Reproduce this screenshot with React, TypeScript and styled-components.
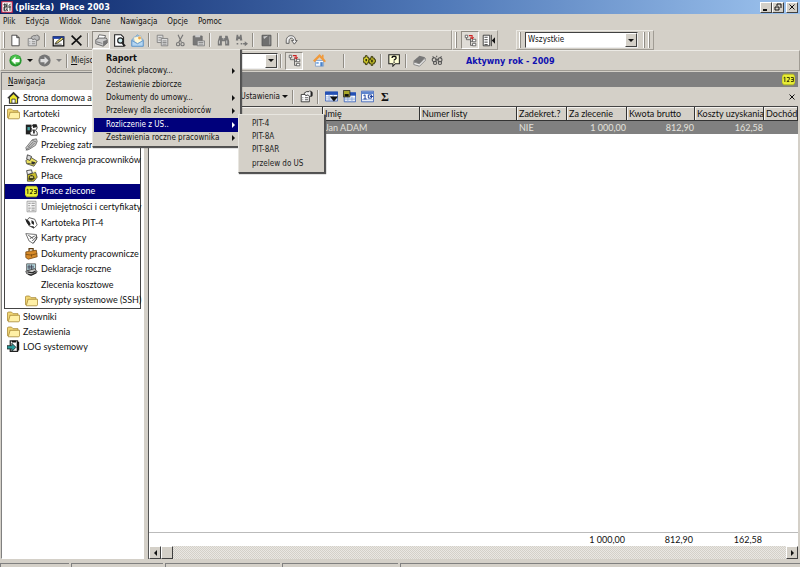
import React from "react";
import styled, { createGlobalStyle, css } from "styled-components";

const face = "#d4d0c8";
const shade = "#808080";
const navy = "#00007b";

const Global = createGlobalStyle`
  * { box-sizing: border-box; }
  html, body { margin: 0; height: 100%; background: ${face}; }
  body { overflow: hidden; color: #111; font: 9px/12px Lato, "Liberation Sans", Arial, sans-serif; }
  #root { height: 100%; }
  button, input, select { font: inherit; color: inherit; margin: 0; padding: 0; border: 0; border-radius: 0; background: none; }
  ul { list-style: none; margin: 0; padding: 0; }
`;

const uiFont = css`font-family: "DejaVu Sans Condensed", "DejaVu Sans", Tahoma, sans-serif; font-size: 8px;`;
const raised = css`border: 1px solid; border-color: #fff #404040 #404040 #fff;`;

/* ---------- icons ---------- */

const Svg = styled.svg<{ $size?: number }>`
  display: block;
  flex: none;
  width: ${p => p.$size ?? 13}px;
  height: ${p => p.$size ?? 13}px;
`;

const shapes: Record<string, React.ReactNode> = {
  app: <><path fill="#fff" stroke="#c02040" strokeWidth="1.5" d="M1 1h14v14H1z" /><path fill="none" stroke="#222" strokeWidth="1.2" d="M3 5h4v3H4v5h3M8 3v10M10 6l3-2M5 3v9M9 8h4M9 13l-2-2M12 6v7" /></>,
  page: <path fill="#fff" stroke="#333" d="M3.500 1.500h6l3 3v10h-9zM9.500 1.500v3h3" />,
  props: <><path fill="#ddd" stroke="#777" d="M1.500 5.500h10v9h-10z" /><path stroke="#777" d="M3 9.500h1M6 9.500h4M3 12h1M6 12h4" /><path fill="#bbb" stroke="#666" d="M5 4l3-2h3l1-1 3 2v4l-3 1-2-2-3 1z" /></>,
  propsDark: <><path fill="#fff" stroke="#222" d="M1.500 5.500h10v9h-10z" /><path stroke="#333" d="M3 9.500h1M6 9.500h4M3 12h1M6 12h4" /><path fill="#eee" stroke="#222" d="M5 4l3-2h3l1-1 3 2v4l-3 1-2-2-3 1z" /><path fill="#222" d="M13 2h2v6h-2z" /></>,
  edit: <><path fill="#fff" stroke="#111" strokeWidth="1.500" d="M1.500 3.500h13v11h-13z" /><path fill="#1c3fa8" d="M1 3h14v3H1z" /><path stroke="#555" d="M3 12.500h9" /><path fill="#efe070" stroke="#222" d="M5 10l7-6 2 2-7 5-3 1z" /></>,
  cross: <path stroke="#111" strokeWidth="2" d="M2 2l12 12M14 2L2 13" />,
  crossThin: <path stroke="#111" strokeWidth="2" d="M3 3l10 10M13 3L3 13" />,
  printer: <><path fill="#fff" stroke="#555" d="M5 1l8 1-2 5H3z" /><path fill="#ccc" stroke="#555" d="M1 7l4-2h9l1 2v4l-5 4-9-3z" /><path fill="#777" d="M10 9l5-2v4l-5 4zM2 9l7 2v1L2 10z" /></>,
  preview: <><path fill="#fff" stroke="#222" strokeWidth="1.300" d="M2 1h8l3 3v11H2z" /><circle cx="9" cy="8" r="3.200" fill="#ccebee" stroke="#222" strokeWidth="1.400" /><path stroke="#222" strokeWidth="2" d="M11 11l4 4" /></>,
  mail: <><path fill="#9cc5e8" stroke="#6a9cc8" d="M1 7l7-6 7 6v8H1z" /><path fill="#fff8d8" stroke="#9cb8d0" d="M3 4l9-2 2 7-6 3-4-3z" /><path fill="#b4d6f2" stroke="#5b93c5" d="M1 8l7 4 7-4v7H1z" /><circle cx="10.500" cy="5" r="1.800" fill="#f0a848" /></>,
  copy: <><path fill="#ddd" stroke="#777" d="M1.500 1.500h7v9h-7z" /><path fill="#ddd" stroke="#777" d="M6.500 5.500h8v9h-8z" /><path stroke="#777" d="M3 4.500h4M3 7.500h3M8 8.500h5M8 10.500h5M8 12.500h5" /></>,
  cut: <g fill="none" stroke="#777" strokeWidth="1.400"><path d="M5 1l4 9M11 1L6 10" /><circle cx="5" cy="12.500" r="2" /><circle cx="10.500" cy="12.500" r="2" /></g>,
  paste: <><path fill="#777" stroke="#666" d="M1.500 2.500h11v11h-11z" /><path fill="#ccc" d="M4 1h6v3H4z" /><path fill="#ddd" stroke="#777" d="M6.500 8.500h9v6h-9z" /><path stroke="#777" d="M8 10.500h6M8 12.500h6" /></>,
  find: <g fill="#777"><path d="M3 2h3v3h4V2h3l2 7v5h-5V9H6v5H1V9z" /><path stroke="#ddd" d="M3 8v4M12 8v4M7 6h2" /></g>,
  findNext: <g fill="#777"><path d="M2 1h2v2h2V1h2l1 7H6V6H4v2H1z" /><path d="M7 11h2v2H7zM10 11h2v2h-2zM12 9l4 3-4 3zM2 11h2v2H2z" /></g>,
  bookGray: <><path fill="#6f6f6f" stroke="#555" d="M2.500 1.500h11v13h-11z" /><path fill="#c9c9c9" d="M4 3l6-1-5 4z" /><path stroke="#aaa" d="M12 3v10" /></>,
  arc: <path fill="#eee" stroke="#555" strokeWidth="1.100" d="M1.500 11.500v-3C1.500 0 13 0 13 8l2 0-3.500 4.500L8 8h2.500C10.500 4 5 4 5 8.500v3z" />,
  tree: <><path fill="none" stroke="#555" d="M3 4v3h5M8 5v9M8 9h3M8 14h3" /><path fill="#fff" stroke="#555" d="M1.500 1.500h3v3h-3zM10.500 6.500h4v3h-4zM10.500 11.500h4v3h-4z" /><path fill="none" stroke="#c22" strokeWidth="1.300" d="M6 2h4v3M8 4l2 2 2-2" /></>,
  collapse: <><path fill="#fff" stroke="#222" d="M1.500 1.500h8v13h-8z" /><path stroke="#222" d="M3 4h4M3 7h4M3 10h4M3 13h4M11.500 1v14" /><path fill="#111" d="M16 4v8l-4-4z" /></>,
  back: <><circle cx="8" cy="8" r="7.500" fill="#27962f" /><circle cx="8" cy="7" r="5.800" fill="#4cc04c" /><path fill="#fff" d="M8 3v3h5v4H8v3L3 8z" /></>,
  fwd: <><circle cx="8" cy="8" r="7.500" fill="#757575" /><path fill="#ddd" d="M8 3v3H3v4h5v3l5-5z" /></>,
  house: <><path fill="#f4f8ff" stroke="#7d9cc6" d="M3 8h10v7H3z" /><path fill="#f09a3c" d="M0 8l8-8 3 3V1h2v4l3 4-2 1-6-6-6 6z" /><path fill="#4b83c9" d="M9 10h3v5H9z" /><path fill="#6aa1e0" d="M4 10h3v2H4z" /></>,
  gears: <><path fill="#d5cd2c" stroke="#33330a" strokeWidth="1.100" d="M1 4h2V2h2v2h2v2h2v3H7v2H5v2H3v-2H1V9H0V6h1z" /><path fill="#b9b226" stroke="#33330a" strokeWidth="1.100" d="M9 5h1V3h2v2h2v2h1.500v3H14v2h-2v2h-2v-2H8v-2H7V7h2z" /><path fill="#33330a" d="M3 6h2v3H3zM10 7h2v3h-2z" /></>,
  help: <><path fill="#ffffd5" stroke="#222" strokeWidth="1.300" d="M1 1h13v11H9l-3 3v-3H1z" /><path fill="none" stroke="#111" strokeWidth="1.600" d="M5 5c0-3 5-3 5 0 0 2-2.500 1-2.500 3M7.500 9.300v1.500" /></>,
  bookFlat: <><path fill="#777" d="M0 9l8-7 7 2-7 8z" /><path fill="#eee" stroke="#777" d="M1 10l7 2 7-7v3l-7 7-7-2z" /></>,
  links: <g fill="none" stroke="#555" strokeWidth="1.300"><circle cx="4" cy="7" r="2.500" /><circle cx="11" cy="7" r="2.500" /><circle cx="5" cy="11" r="2" /><circle cx="11" cy="11" r="2" /><path d="M5 7h5M2 3l2 2M7 2v2M13 3l-2 2" /></g>,
  grid: <><path fill="#fff" stroke="#2a55b5" d="M.5 2.500h15v11H.5z" /><path fill="#2450b5" d="M0 2h16v4H0z" /><path stroke="#86a2d8" d="M1 8.500h14M1 11h14M5 6v8M10 6v8" /><path fill="#111" d="M6 8h10l-5 6z" /></>,
  gridSave: <><path fill="#fff" stroke="#2a55b5" d="M1.500 3.500h14v11h-14z" /><path fill="#2450b5" d="M8 3h8v4H8z" /><path stroke="#86a2d8" d="M2 10h13M2 12h13M6 8v7M11 8v7" /><path fill="#a9a72a" stroke="#222" d="M.5.500h8v8h-8z" /><path fill="#111" d="M2 5h5v3H2z" /></>,
  gridFit: <><path fill="#fff" stroke="#2a55b5" d="M.5 1.500h15v13H.5z" /><path fill="#5f86ce" d="M1 2h14v3H1z" /><path stroke="#86a2d8" d="M1 12h14" /><path fill="none" stroke="#1b3f9b" strokeWidth="1.200" d="M3 7l2-1v5M3 11h4M9 6v4h4V6zM11 8h4" /></>,
  badge: <><path fill="#e9ee35" stroke="#b2b81c" d="M2 1.500h12l2 3v7l-2 3H2l-2-3v-7z" /><path fill="none" stroke="#38380a" strokeWidth="1.200" d="M2 6l1.500-1v6M6 5.500h3v2.500L6 10.500h3M11 5.500h3v5h-3M11.500 8H14" /></>,
  home: <><path fill="#efe92e" stroke="#333" strokeWidth="1.300" d="M3 8v7h10V8L8 3z" /><path fill="none" stroke="#333" strokeWidth="1.600" d="M1 9l7-7 7 7" /><path fill="#fff" stroke="#333" d="M6 10h4v5H6z" /></>,
  folder: <><path fill="#f2d775" stroke="#a88834" d="M.5 13.500v-10l1-1h4l2 2h6v2" /><path fill="#fff0a6" stroke="#a88834" d="M3.500 6.500h12v7l-1 1H1.500l2-7z" /></>,
  people: <><path fill="#222" d="M1 2h7v12H1z" /><path fill="#4aa5a5" d="M3 5h3v4H3z" /><path fill="#fff" stroke="#222" d="M7 5l3-3h4l1 4-2 3 2 3v3H7l-1-3 3-3z" /><path fill="#222" d="M9 2h5l1 3-5 1zM10 8h2v5h-2z" /></>,
  tool: <><path fill="#c8c8c8" stroke="#666" d="M1 12l8-10 5-1 1 3-2 5-8 5-3 1z" /><path fill="none" stroke="#666" d="M4 11l6-6M6 12l6-6M9 3l5 2M1 15l5-4" /></>,
  clock: <><path fill="#e8df5e" stroke="#444" d="M1 8l6-4 8 5-4 6-9-3z" /><path fill="#ddd" stroke="#333" d="M3 1l5 2-2 5-4-2z" /><path fill="#333" d="M8 9l5 1-2 3-8-1v-1l5 1z" /></>,
  money: <><path fill="#c9bd27" stroke="#444" d="M3 7l10-3 2 6-4 5H3z" /><path fill="#eee" stroke="#333" d="M2 2l6-1 1 4-6 2z" /><path fill="#3c3c18" d="M5 9l3-2 3 2 1 3-4 2-4-1z" /><path stroke="#fff6a0" strokeWidth="1.500" d="M6 10h4M10 4l4-2" /></>,
  list: <><path fill="#f5f5f5" stroke="#999" d="M2.500 1.500h11v13h-11z" /><path stroke="#777" d="M4 4h3M8 4h4M4 7h2M8 7h4M4 10h3M8 10h4M4 12.500h2M8 12.500h4" /></>,
  card: <><path fill="#fff" stroke="#444" d="M5 2l7 2 3 7-4 4-6-3-3-6z" /><path fill="#222" d="M0 3l5 3 2 4-2 2-3-4zM8 5l3 2v4L8 9zM6 12l5 1v2z" /></>,
  sheet: <><path fill="#fff" stroke="#555" d="M1 2l12 1 2 4-5 7-5-3z" /><path fill="none" stroke="#555" strokeWidth="1.200" d="M4 4l6 4M6 8l6-3M9 11l5-5M14 3v6l-4 5" /></>,
  case: <><path fill="none" stroke="#5a3a10" strokeWidth="1.500" d="M5 5V2h5v3" /><path fill="#d68a28" stroke="#7a4a10" d="M1 6l13-2 1 8-11 3-3-2z" /><path stroke="#7a4a10" d="M1 9l7 1 7-2M8 9v3" /></>,
  declare: <><path fill="#b7dce2" stroke="#555" d="M2 1h11v8H2z" /><path stroke="#445" d="M3 4h8M3 6h8M5 2v6M8 2v6" /><path fill="#ccc" stroke="#333" d="M1 10l11-3 3 4-8 4-5-2z" /><path stroke="#222" strokeWidth="1.500" fill="none" d="M3 11l6 1 4-2M4 14l4 1 6-3" /></>,
  log: <><path fill="#fff" stroke="#222" strokeWidth="1.500" d="M4 1h9v13H4z" /><path fill="#2a9e9e" stroke="#222" d="M0 7h6V4l5 5-5 5v-3H0z" /><path fill="#111" d="M12 2h3v11h-3zM6 1h5v2H6z" /></>,
  none: null,
};

const Icon = ({ name, size }: { name: string; size?: number }) => (
  <Svg viewBox="0 0 16 16" $size={size} fill="none" aria-hidden="true">{shapes[name]}</Svg>
);

const Arrow = styled.span<{ $dir: "down" | "right" | "left"; $tone?: string }>`
  display: block;
  flex: none;
  width: 0;
  height: 0;
  border: 3px solid transparent;
  ${p => p.$dir === "down" && css`border-width: 3px 3px 0; border-top-color: ${p.$tone ?? "#111"};`}
  ${p => p.$dir === "right" && css`border-width: 3px 0 3px 3px; border-left-color: ${p.$tone ?? "#111"};`}
  ${p => p.$dir === "left" && css`border-width: 3px 3px 3px 0; border-right-color: ${p.$tone ?? "#111"};`}
`;

/* ---------- window frame ---------- */

const Window = styled.div`
  height: 100vh;
  display: flex;
  flex-direction: column;
  background: ${face};
`;

const TitleBar = styled.header`
  height: 14px;
  flex: none;
  display: flex;
  align-items: center;
  padding: 0 2px 0 1px;
  gap: 2px;
  background: linear-gradient(90deg, #0a2569, #5079b8 55%, #9dc3ee);
`;

const Title = styled.h1`
  flex: 1;
  margin: 0;
  color: #fff;
  white-space: pre;
  ${uiFont}
  font-size: 9px;
  line-height: 12px;
  font-weight: bold;
`;

const CaptionButtons = styled.div`display: flex;`;

const CaptionButton = styled.button<{ $apart?: boolean }>`
  width: 12px;
  height: 11px;
  display: grid;
  place-items: center;
  background: ${face};
  ${raised}
  margin-left: ${p => (p.$apart ? 2 : 0)}px;
`;

const MenuBar = styled.nav`
  height: 16px;
  flex: none;
  display: flex;
  align-items: center;
  gap: 10px;
  padding: 0 3px;
`;

const MenuButton = styled.button`
  ${uiFont}
  line-height: 14px;
`;

/* ---------- toolbars ---------- */

const BarRow = styled.div`
  height: 20px;
  flex: none;
  display: flex;
  position: relative;
  z-index: 2;
`;

const Bar = styled.div<{ $width?: number }>`
  display: flex;
  align-items: center;
  border: 1px solid;
  border-color: #eceae5 #a09c94 #a09c94 #eceae5;
  ${p => p.$width && css`width: ${p.$width}px;`}
`;

const AddressRow = styled(Bar)`
  height: 21px;
  flex: none;
`;

const Gap = styled.span<{ $w: number }>`flex: 0 0 ${p => p.$w}px;`;

const Grip = styled.span`
  width: 2px;
  height: 16px;
  flex: none;
  margin: 0 1px 0 2px;
  border-left: 1px solid #fff;
  border-right: 1px solid #908c84;
`;

const Sep = styled.span`
  width: 2px;
  height: 14px;
  flex: none;
  margin: 0 3px 0 2px;
  border-left: 1px solid #908c84;
  border-right: 1px solid #eee;
`;

const ToolButton = styled.button<{ $down?: boolean; $narrow?: boolean }>`
  width: ${p => (p.$narrow ? 11 : 18)}px;
  height: 18px;
  flex: none;
  display: grid;
  place-items: center;
  border: 1px solid transparent;
  ${p => p.$down && css`border-color: #908c84 #fff #fff #908c84; background: #dfdcd6;`}
`;

const SumButton = styled(ToolButton)`
  font: bold 12px/14px "Liberation Serif", serif;
`;

const Combo = styled.div<{ $width: number }>`
  width: ${p => p.$width}px;
  height: 16px;
  flex: none;
  display: flex;
  background: #fff;
  border: 1px solid;
  border-color: #404040 #eee #eee #404040;
`;

const ComboSelect = styled.select`
  flex: 1;
  min-width: 0;
  appearance: none;
  padding-left: 2px;
  ${uiFont}
`;

const ComboInput = styled.input`
  flex: 1;
  min-width: 0;
  outline: 0;
`;

const ComboArrow = styled.span`
  width: 12px;
  display: grid;
  place-items: center;
  background: ${face};
  ${raised}
`;

const FieldLabel = styled.label`
  width: 30px;
  ${uiFont}
`;

const YearLabel = styled.strong`
  ${uiFont}
  font-size: 9px;
  color: #1010b0;
`;

/* ---------- popup menus ---------- */

const MenuAnchor = styled.div`
  position: relative;
  flex: none;
`;

const popup = css`
  position: absolute;
  display: grid;
  grid-auto-rows: 1fr;
  padding: 1px;
  background: ${face};
  border: 1px solid;
  border-color: #e8e6e0 #505050 #505050 #e8e6e0;
  box-shadow: 1px 1px 1px #555;
  ${uiFont}
`;

const ReportMenu = styled.ul`
  ${popup}
  top: 100%;
  left: 0;
  width: 149px;
  height: 98px;
`;

const SubMenu = styled.ul`
  ${popup}
  top: -4px;
  left: 144px;
  width: 87px;
  height: 59px;
  color: #222;
  padding: 2px 1px;
`;

const PopupItem = styled.li<{ $active?: boolean }>`
  position: relative;
  display: grid;
  background: ${p => (p.$active ? navy : "transparent")};
  color: ${p => (p.$active ? "#fff" : "inherit")};
`;

const PopupButton = styled.button<{ $strong?: boolean }>`
  display: flex;
  align-items: center;
  justify-content: space-between;
  padding: 0 4px 0 12px;
  text-align: left;
  white-space: nowrap;
  line-height: 12px;
  ${p => p.$strong && css`font-weight: bold; font-size: 9px;`}
`;

/* ---------- body ---------- */

const Body = styled.main`
  flex: 1;
  min-height: 0;
  display: flex;
  gap: 4px;
  padding: 1px 2px 0 1px;
`;

const SidePane = styled.aside`
  width: 143px;
  flex: none;
  display: flex;
  flex-direction: column;
  border: 1px solid;
  border-color: ${shade} #fff #fff ${shade};
`;

const SideTitle = styled.h2`
  height: 17px;
  flex: none;
  margin: 0;
  padding: 2px 6px;
  font-weight: normal;
  ${uiFont}
  line-height: 14px;
`;

const SideTree = styled.div`
  flex: 1;
  min-height: 0;
  overflow: hidden;
  background: #fff;
  padding: 0 2px;
`;

const Group = styled.ul`
  display: grid;
  grid-template-columns: minmax(0, 1fr);
  grid-auto-rows: 1fr;
  height: 204px;
  border: 1px solid #444;
`;

const NodeRow = styled.li<{ $active?: boolean }>`
  display: grid;
  background: ${p => (p.$active ? navy : "transparent")};
  color: ${p => (p.$active ? "#fff" : "inherit")};
`;

const NodeButton = styled.button<{ $nested?: boolean }>`
  width: 100%;
  min-height: 15px;
  display: flex;
  align-items: center;
  gap: 3px;
  padding-left: ${p => (p.$nested ? 20 : 2)}px;
  white-space: nowrap;
  text-align: left;
`;

const TopList = styled.ul`
  ${NodeButton} { padding-left: 3px; }
`;

const WorkPane = styled.section`
  flex: 1;
  min-width: 0;
  display: flex;
  flex-direction: column;
  border-left: 1px solid #555;
`;

const WorkTitle = styled.div`
  height: 15px;
  flex: none;
  display: flex;
  align-items: center;
  justify-content: flex-end;
  padding-right: 3px;
  background: ${shade};
`;

const WorkTools = styled.div`
  height: 19px;
  flex: none;
  display: flex;
  align-items: center;
  padding-right: 1px;
`;

const SettingsButton = styled.button`
  display: flex;
  align-items: center;
  justify-content: flex-end;
  gap: 2px;
  width: 139px;
  ${uiFont}
`;

const Push = styled.span`flex: 1;`;

const TableArea = styled.div`
  flex: 1;
  min-height: 0;
  overflow: hidden;
  background: #fff;
  border-top: 1px solid #444;
`;

const Table = styled.table`
  width: 100%;
  height: 100%;
  table-layout: fixed;
  border-collapse: separate;
  border-spacing: 0;
`;

const Col = styled.col<{ $w?: number }>`width: ${p => (p.$w ? `${p.$w}px` : "auto")};`;

const Th = styled.th`
  height: 14px;
  padding: 0 0 0 2px;
  background: ${face};
  border-right: 1px solid #333;
  border-bottom: 1px solid #333;
  box-shadow: inset 1px 1px #f4f2ee;
  font-weight: normal;
  text-align: left;
  white-space: nowrap;
  overflow: hidden;
`;

const Td = styled.td<{ $num?: boolean }>`
  height: 13px;
  padding: 0 ${p => (p.$num ? 1 : 2)}px;
  background: ${shade};
  color: #e4e2dd;
  text-align: ${p => (p.$num ? "right" : "left")};
  white-space: nowrap;
`;

const Filler = styled.td`padding: 0;`;

const SumCell = styled.td`
  height: 14px;
  padding: 0 2px;
  border-top: 1px solid #bbb;
  text-align: right;
`;

const ScrollTrack = styled.div`
  height: 13px;
  flex: none;
  display: flex;
  background: repeating-conic-gradient(#d4d0c8 0 25%, #e9e7e3 0 50%) 0 0 / 2px 2px;
`;

const ScrollButton = styled.button`
  width: 12px;
  display: grid;
  place-items: center;
  background: ${face};
  ${raised}
`;

const StatusBar = styled.footer`
  height: 8px;
  flex: none;
  display: flex;
  gap: 2px;
  padding-top: 4px;
`;

const StatusPanel = styled.div<{ $w?: number }>`
  flex: ${p => (p.$w ? `0 0 ${p.$w}px` : "1")};
  border-top: 1px solid ${shade};
  border-left: 1px solid ${shade};
`;

/* ---------- data ---------- */

const menus = ["Plik", "Edycja", "Widok", "Dane", "Nawigacja", "Opcje", "Pomoc"];

const reportItems = [
  { text: "Raport", strong: true },
  { text: "Odcinek płacowy...", more: true },
  { text: "Zestawienie zbiorcze" },
  { text: "Dokumenty do umowy...", more: true },
  { text: "Przelewy dla zleceniobiorców", more: true },
  { text: "Rozliczenie z US..", more: true, sub: ["PIT-4", "PIT-8A", "PIT-8AR", "przelew do US"] },
  { text: "Zestawienia roczne pracownika", more: true },
];

const records = [
  ["Pracownicy", "people"],
  ["Przebieg zatrudnienia", "tool"],
  ["Frekwencja pracowników", "clock"],
  ["Płace", "money"],
  ["Prace zlecone", "badge"],
  ["Umiejętności i certyfikaty", "list"],
  ["Kartoteka PIT-4", "card"],
  ["Karty pracy", "sheet"],
  ["Dokumenty pracownicze", "case"],
  ["Deklaracje roczne", "declare"],
  ["Zlecenia kosztowe", "none"],
  ["Skrypty systemowe (SSH)", "folder"],
];

const columns: { title: string; w?: number; value: string; sum?: string; num?: boolean }[] = [
  { title: "Nazwisko", value: "ADAM" },
  { title: "Imię", w: 97, value: "Jan ADAM" },
  { title: "Numer listy", w: 97, value: "" },
  { title: "Zadekret.?", w: 50, value: "NIE" },
  { title: "Za zlecenie", w: 60, value: "1 000,00", sum: "1 000,00", num: true },
  { title: "Kwota brutto", w: 68, value: "812,90", sum: "812,90", num: true },
  { title: "Koszty uzyskania", w: 69, value: "162,58", sum: "162,58", num: true },
  { title: "Dochód", w: 34, value: "" },
];

const Tool = ({ icon, label, down }: { icon: string; label: string; down?: boolean }) => (
  <ToolButton aria-label={label} $down={down}><Icon name={icon} /></ToolButton>
);

const Node = ({ icon, text, nested }: { icon: string; text: string; nested?: boolean }) => (
  <NodeButton $nested={nested}><Icon name={icon} />{text}</NodeButton>
);

export default function App() {
  return (
    <>
      <Global />
      <Window>
        <TitleBar>
          <Icon name="app" size={12} />
          <Title>{"(pliszka)  Płace 2003"}</Title>
          <CaptionButtons>
            <CaptionButton aria-label="Minimalizuj"><Svg $size={8} viewBox="0 0 8 8"><path d="M1 7h4" stroke="#111" strokeWidth="2" /></Svg></CaptionButton>
            <CaptionButton aria-label="Przywróć"><Svg $size={8} viewBox="0 0 8 8"><path d="M3 1h4v4M1 4h4v3H1zM3 1v2" fill="none" stroke="#111" /></Svg></CaptionButton>
            <CaptionButton aria-label="Zamknij" $apart><Icon name="crossThin" size={8} /></CaptionButton>
          </CaptionButtons>
        </TitleBar>
        <MenuBar>{menus.map(m => <MenuButton key={m}>{m}</MenuButton>)}</MenuBar>

        <BarRow>
          <Bar $width={452}>
            <Grip />
            <Tool icon="page" label="Nowy" /><Tool icon="props" label="Właściwości" />
            <Sep />
            <Tool icon="edit" label="Edytuj" /><Tool icon="cross" label="Usuń" />
            <Sep />
            <MenuAnchor>
              <Tool icon="printer" label="Drukuj" down />
              <ReportMenu>
                {reportItems.map(item => (
                  <PopupItem key={item.text} $active={!!item.sub}>
                    <PopupButton $strong={item.strong}>
                      {item.text}
                      {item.more && <Arrow $dir="right" $tone={item.sub ? "#fff" : undefined} />}
                    </PopupButton>
                    {item.sub && (
                      <SubMenu>
                        {item.sub.map(s => <PopupItem key={s}><PopupButton>{s}</PopupButton></PopupItem>)}
                      </SubMenu>
                    )}
                  </PopupItem>
                ))}
              </ReportMenu>
            </MenuAnchor>
            <Tool icon="preview" label="Podgląd" /><Tool icon="mail" label="Wyślij" />
            <Sep />
            <Tool icon="copy" label="Kopiuj" /><Tool icon="cut" label="Wytnij" /><Tool icon="paste" label="Wklej" />
            <Sep />
            <Tool icon="find" label="Znajdź" /><Tool icon="findNext" label="Znajdź następny" />
            <Sep />
            <Tool icon="bookGray" label="Notatnik" />
            <Sep />
            <Tool icon="arc" label="Odśwież" />
          </Bar>
          <Bar $width={46}>
            <Grip /><Gap $w={3} />
            <Tool icon="tree" label="Drzewo" down /><Tool icon="collapse" label="Zwiń panel" />
          </Bar>
          <Gap $w={18} />
          <Bar $width={138}>
            <Grip /><Gap $w={3} />
            <Combo $width={113}>
              <ComboSelect aria-label="Filtr"><option>Wszystkie</option></ComboSelect>
              <ComboArrow><Arrow $dir="down" /></ComboArrow>
            </Combo>
            <Gap $w={3} /><Grip /><Grip />
          </Bar>
        </BarRow>

        <AddressRow>
          <Grip />
          <Tool icon="back" label="Wstecz" />
          <ToolButton $narrow aria-label="Historia wstecz"><Arrow $dir="down" /></ToolButton>
          <Tool icon="fwd" label="Dalej" />
          <ToolButton $narrow aria-label="Historia dalej"><Arrow $dir="down" $tone={shade} /></ToolButton>
          <Sep />
          <FieldLabel htmlFor="place"><u>M</u>iejsce</FieldLabel>
          <Gap $w={4} />
          <Combo $width={173}>
            <ComboInput id="place" />
            <ComboArrow><Arrow $dir="down" /></ComboArrow>
          </Combo>
          <Sep />
          <Tool icon="tree" label="Nawigacja" down />
          <Gap $w={7} />
          <Tool icon="house" label="Strona domowa" />
          <Gap $w={13} />
          <Sep />
          <Gap $w={12} />
          <Tool icon="gears" label="Ustawienia" />
          <Sep />
          <Tool icon="help" label="Pomoc" />
          <Sep />
          <Tool icon="bookFlat" label="Słownik" /><Tool icon="links" label="Powiązania" />
          <Gap $w={20} />
          <YearLabel>Aktywny rok - 2009</YearLabel>
        </AddressRow>

        <Body>
          <SidePane>
            <SideTitle><u>N</u>awigacja</SideTitle>
            <SideTree>
              <TopList><NodeRow><Node icon="home" text="Strona domowa aplikacji" /></NodeRow></TopList>
              <Group>
                <NodeRow><Node icon="folder" text="Kartoteki" /></NodeRow>
                {records.map(([text, icon]) => (
                  <NodeRow key={text} $active={text === "Prace zlecone"}><Node nested icon={icon} text={text} /></NodeRow>
                ))}
              </Group>
              <TopList>
                <NodeRow><Node icon="folder" text="Słowniki" /></NodeRow>
                <NodeRow><Node icon="folder" text="Zestawienia" /></NodeRow>
                <NodeRow><Node icon="log" text="LOG systemowy" /></NodeRow>
              </TopList>
            </SideTree>
          </SidePane>

          <WorkPane>
            <WorkTitle><Icon name="badge" /></WorkTitle>
            <WorkTools>
              <SettingsButton>Ustawienia<Arrow $dir="down" /></SettingsButton>
              <Gap $w={2} /><Sep />
              <Tool icon="propsDark" label="Właściwości" />
              <Sep />
              <Tool icon="grid" label="Kolumny" /><Tool icon="gridSave" label="Zapisz układ" /><Tool icon="gridFit" label="Dopasuj" />
              <SumButton aria-label="Suma">Σ</SumButton>
              <Push />
              <ToolButton $narrow aria-label="Zamknij panel"><Icon name="crossThin" size={8} /></ToolButton>
            </WorkTools>
            <TableArea>
              <Table>
                <colgroup>{columns.map(c => <Col key={c.title} $w={c.w} />)}</colgroup>
                <thead><tr>{columns.map(c => <Th key={c.title}>{c.title}</Th>)}</tr></thead>
                <tbody>
                  <tr>{columns.map(c => <Td key={c.title} $num={c.num}>{c.value}</Td>)}</tr>
                  <tr><Filler colSpan={columns.length} /></tr>
                </tbody>
                <tfoot><tr>{columns.map(c => <SumCell key={c.title}>{c.sum}</SumCell>)}</tr></tfoot>
              </Table>
            </TableArea>
            <ScrollTrack>
              <ScrollButton aria-label="Przewiń w lewo"><Arrow $dir="left" /></ScrollButton>
              <ScrollButton aria-label="Suwak" />
              <Push />
              <ScrollButton aria-label="Przewiń w prawo"><Arrow $dir="right" /></ScrollButton>
            </ScrollTrack>
          </WorkPane>
        </Body>
        <StatusBar>
          <StatusPanel $w={69} /><StatusPanel $w={92} /><StatusPanel $w={115} /><StatusPanel $w={116} /><StatusPanel />
        </StatusBar>
      </Window>
    </>
  );
}
